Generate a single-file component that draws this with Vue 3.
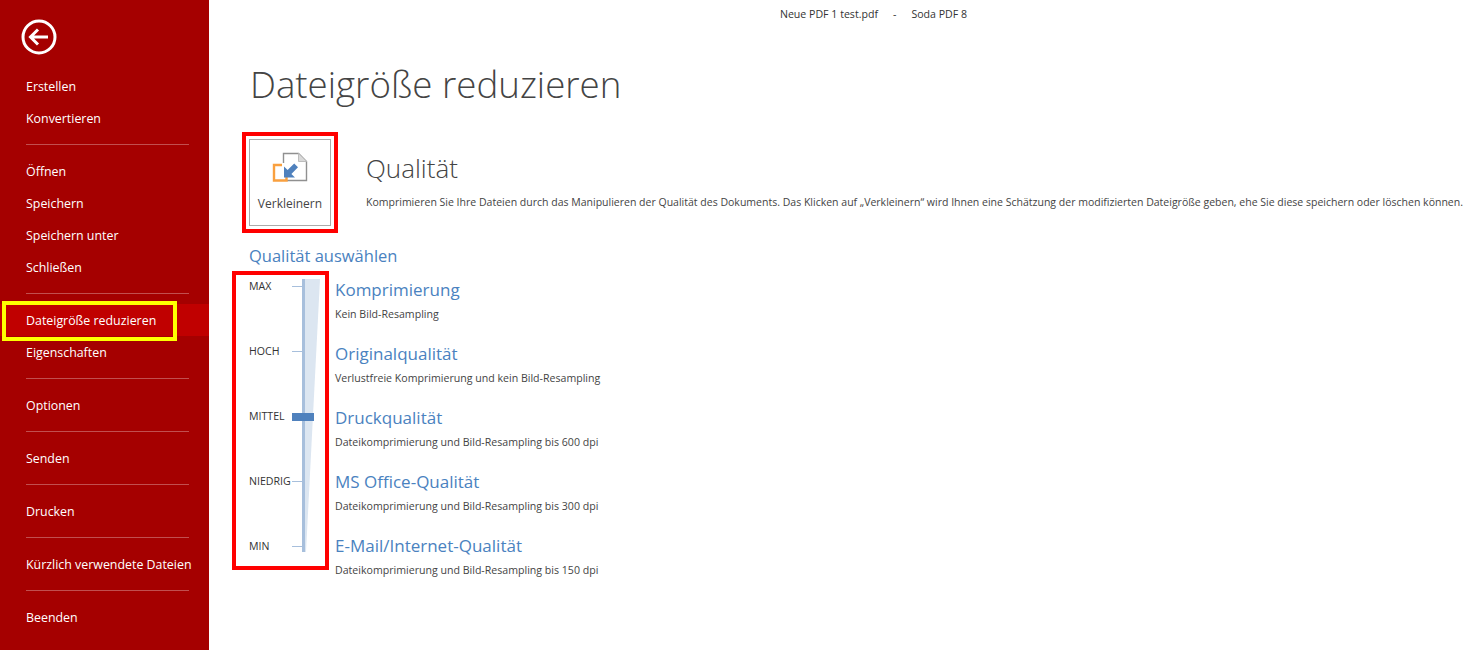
<script setup>
const menuGroups = [
  ['Erstellen', 'Konvertieren'],
  ['Öffnen', 'Speichern', 'Speichern unter', 'Schließen'],
  ['Dateigröße reduzieren', 'Eigenschaften'],
  ['Optionen'],
  ['Senden'],
  ['Drucken'],
  ['Kürzlich verwendete Dateien'],
  ['Beenden']
]

const levels = ['MAX', 'HOCH', 'MITTEL', 'NIEDRIG', 'MIN']

const qualities = [
  { title: 'Komprimierung', text: 'Kein Bild-Resampling' },
  { title: 'Originalqualität', text: 'Verlustfreie Komprimierung und kein Bild-Resampling' },
  { title: 'Druckqualität', text: 'Dateikomprimierung und Bild-Resampling bis 600 dpi' },
  { title: 'MS Office-Qualität', text: 'Dateikomprimierung und Bild-Resampling bis 300 dpi' },
  { title: 'E-Mail/Internet-Qualität', text: 'Dateikomprimierung und Bild-Resampling bis 150 dpi' }
]
</script>

<template>
  <div class="app">
    <aside class="sidebar">
      <button class="back" aria-label="Zurück">
        <svg width="36" height="36" viewBox="0 0 36 36">
          <circle cx="18" cy="18" r="16" fill="none" stroke="#fff" stroke-width="3" />
          <path d="M9.5 18H27M17 10.5L9.5 18L17 25.5" fill="none" stroke="#fff" stroke-width="3" />
        </svg>
      </button>
      <div v-for="(group, index) in menuGroups" :key="index" class="group">
        <div
          v-for="item in group"
          :key="item"
          class="menu-item"
          :class="{ active: item === 'Dateigröße reduzieren' }"
        >
          {{ item }}
          <span v-if="item === 'Dateigröße reduzieren'" class="yellow-mark"></span>
        </div>
      </div>
    </aside>

    <main class="main">
      <div class="titlebar">
        <span>Neue PDF 1 test.pdf</span>
        <span>-</span>
        <span>Soda PDF 8</span>
      </div>
      <h1 class="page-title">Dateigröße reduzieren</h1>

      <section class="compress">
        <div class="red-frame button-frame">
          <button class="shrink-btn">
            <svg width="38" height="34" viewBox="0 0 38 34">
              <path d="M12.5 12V2.5H27.5L35.5 10.5V29.5H16" fill="none" stroke="#909090" stroke-width="1.4" />
              <path d="M27.5 2.5V10.5H35.5Z" fill="#d9d9d9" stroke="#bdbdbd" />
              <path d="M11 14H3V29.5H15.5V26" fill="none" stroke="#f9a03f" stroke-width="2.4" />
              <path d="M13 15.5V26.5H24L20.4 22.9L27 16.3L23.2 12.5L16.6 19.1Z" fill="#4f81bd" />
            </svg>
            <span>Verkleinern</span>
          </button>
        </div>
        <div class="compress-info">
          <h2>Qualität</h2>
          <p>Komprimieren Sie Ihre Dateien durch das Manipulieren der Qualität des Dokuments. Das Klicken auf „Verkleinern“ wird Ihnen eine Schätzung der modifizierten Dateigröße geben, ehe Sie diese speichern oder löschen können.</p>
        </div>
      </section>

      <h3 class="select-title">Qualität auswählen</h3>

      <section class="quality">
        <div class="red-frame scale-frame">
          <div class="levels">
            <div v-for="level in levels" :key="level" class="level">
              <span>{{ level }}</span>
              <i></i>
            </div>
          </div>
          <svg class="track" width="18" height="273" viewBox="0 0 18 273">
            <path d="M0 0H18L4 273H0Z" fill="#dce6f1" />
            <rect width="3" height="273" fill="#a7bfdc" />
          </svg>
          <div class="thumb"></div>
        </div>
        <div class="options">
          <div v-for="option in qualities" :key="option.title" class="option">
            <div class="option-title">{{ option.title }}</div>
            <div class="option-text">{{ option.text }}</div>
          </div>
        </div>
      </section>
    </main>
  </div>
</template>

<style scoped>
.app {
  display: flex;
  width: 1479px;
  height: 650px;
  overflow: hidden;
  background: #fff;
  font-family: "Open Sans", "Liberation Sans", sans-serif;
  color: #444;
}

/* Левая панель */
.sidebar {
  flex: none;
  width: 209px;
  box-sizing: border-box;
  background: #a50000;
  color: #fff;
  font-size: 12.4px;
}

.back {
  display: block;
  width: 36px;
  height: 36px;
  margin: 19px 0 15px 21px;
  padding: 0;
  border: 0;
  background: none;
}

.group + .group {
  position: relative;
  margin-top: 21px;
}

.group + .group::before {
  content: "";
  position: absolute;
  top: -11px;
  left: 26px;
  width: 163px;
  height: 1px;
  background: #c14f4f;
}

.menu-item {
  position: relative;
  height: 32px;
  padding-left: 26px;
  line-height: 34px;
  white-space: nowrap;
}

.menu-item.active {
  background: #c00000;
}

.yellow-mark {
  position: absolute;
  top: -3px;
  left: 2px;
  width: 175px;
  height: 40px;
  box-sizing: border-box;
  border: 4px solid #ffff00;
}

/* Основная часть */
.main {
  flex: 1;
  min-width: 0;
  padding-left: 23px;
}

.titlebar {
  display: flex;
  justify-content: center;
  gap: 15px;
  height: 28px;
  padding-left: 36px;
  color: #333;
  font-size: 10.6px;
  line-height: 28px;
}

.page-title {
  margin: 30px 0 0 18px;
  height: 74px;
  color: #444;
  font-size: 36.7px;
  font-weight: 300;
  line-height: 52px;
  white-space: nowrap;
}

.compress {
  display: flex;
  margin-left: 10px;
  height: 101px;
}

.red-frame {
  box-sizing: border-box;
  border: 4px solid #ff0000;
}

.button-frame {
  flex: none;
  width: 96px;
  height: 101px;
  padding: 3px;
}

.shrink-btn {
  display: flex;
  flex-direction: column;
  align-items: center;
  width: 82px;
  height: 87px;
  box-sizing: border-box;
  padding: 11px 0 0;
  border: 1px solid #ababab;
  background: #fff;
  color: #444;
  font: inherit;
  font-size: 12px;
}

.shrink-btn span {
  margin-top: 10px;
}

.compress-info {
  margin-left: 28px;
  white-space: nowrap;
}

.compress-info h2 {
  margin: 16px 0 0;
  color: #444;
  font-size: 26px;
  font-weight: 300;
  line-height: 40px;
}

.compress-info p {
  margin: 6px 0 0;
  color: #444;
  font-size: 10.52px;
  line-height: 16px;
}

.select-title {
  margin: 11px 0 0 17px;
  color: #4a82c0;
  font-size: 16.5px;
  font-weight: 400;
  line-height: 24px;
}

.quality {
  display: flex;
  margin-top: 3px;
}

.scale-frame {
  position: relative;
  flex: none;
  display: flex;
  width: 97px;
  height: 299px;
  padding: 4px 0 0 13px;
}

.levels {
  width: 53px;
  margin-top: -3px;
}

.level {
  display: flex;
  align-items: center;
  justify-content: space-between;
  height: 20px;
  margin-bottom: 45px;
  color: #333;
  font-size: 10.6px;
}

.level i {
  flex: none;
  width: 10px;
  height: 1px;
  background: #a7bfdc;
}

.track {
  flex: none;
}

.thumb {
  position: absolute;
  top: 138px;
  left: 56px;
  width: 22px;
  height: 8px;
  background: #4f81bd;
}

.options {
  margin-left: 6px;
}

.option {
  height: 64px;
}

.option-title {
  color: #4a82c0;
  font-size: 17px;
  line-height: 26px;
  padding-top: 6px;
}

.option-text {
  color: #444;
  font-size: 10.6px;
  line-height: 16px;
  margin-top: 3px;
}
</style>
